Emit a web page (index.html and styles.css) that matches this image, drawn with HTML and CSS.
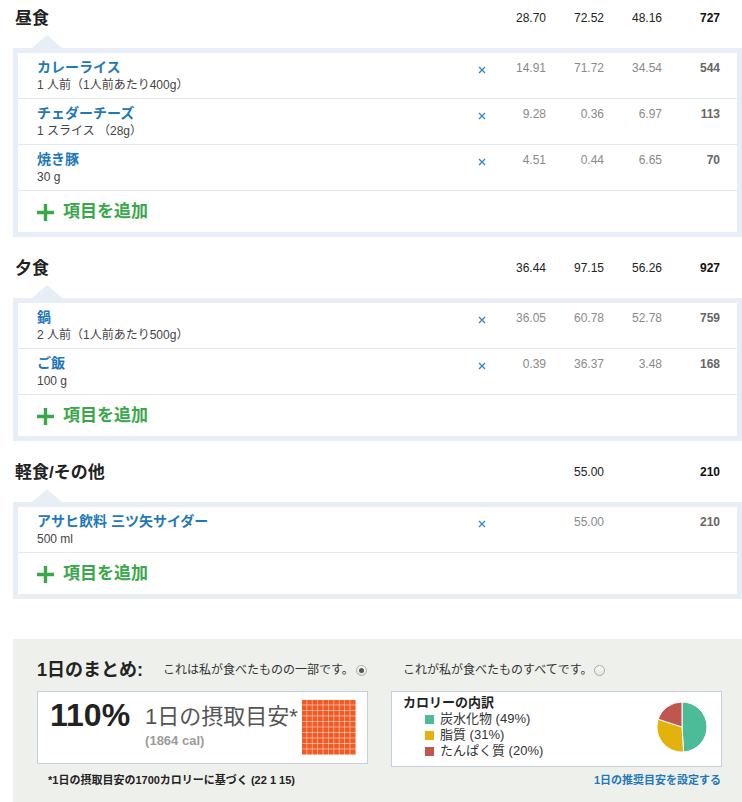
FILE: index.html
```html
<!DOCTYPE html>
<html lang="ja">
<head>
  <meta charset="UTF-8" />
  <meta name="viewport" content="width=device-width, initial-scale=1.0"/>
  <title>食事の記録</title>
  <link rel="stylesheet" href="styles.css">
</head>
<body>
  <div class="diary">

    <div class="meal">
      <div class="meal-head">
        <h2>昼食</h2><span></span>
        <span class="n">28.70</span><span class="n">72.52</span><span class="n">48.16</span><span class="n cal">727</span>
      </div>
      <div class="meal-card">
        <div class="food-row">
          <div class="food"><a href="#">カレーライス</a><div class="qty">1 人前（1人前あたり400g）</div></div>
          <span class="del"><svg width="8" height="8" viewBox="0 0 8 8"><path d="M1 1L7 7M7 1L1 7" stroke="#2f86c4" stroke-width="1.3"/></svg></span>
          <span class="n">14.91</span><span class="n">71.72</span><span class="n">34.54</span><span class="n cal">544</span>
        </div>
        <div class="food-row">
          <div class="food"><a href="#">チェダーチーズ</a><div class="qty">1 スライス （28g）</div></div>
          <span class="del"><svg width="8" height="8" viewBox="0 0 8 8"><path d="M1 1L7 7M7 1L1 7" stroke="#2f86c4" stroke-width="1.3"/></svg></span>
          <span class="n">9.28</span><span class="n">0.36</span><span class="n">6.97</span><span class="n cal">113</span>
        </div>
        <div class="food-row">
          <div class="food"><a href="#">焼き豚</a><div class="qty">30 g</div></div>
          <span class="del"><svg width="8" height="8" viewBox="0 0 8 8"><path d="M1 1L7 7M7 1L1 7" stroke="#2f86c4" stroke-width="1.3"/></svg></span>
          <span class="n">4.51</span><span class="n">0.44</span><span class="n">6.65</span><span class="n cal">70</span>
        </div>
        <div class="add-row">
          <a href="#" class="add"><svg width="17" height="17" viewBox="0 0 17 17"><path d="M8.5 0V17M0 8.5H17" stroke="#3aa84a" stroke-width="3.4"/></svg>項目を追加</a>
        </div>
      </div>
    </div>

    <div class="meal">
      <div class="meal-head">
        <h2>夕食</h2><span></span>
        <span class="n">36.44</span><span class="n">97.15</span><span class="n">56.26</span><span class="n cal">927</span>
      </div>
      <div class="meal-card">
        <div class="food-row">
          <div class="food"><a href="#">鍋</a><div class="qty">2 人前（1人前あたり500g）</div></div>
          <span class="del"><svg width="8" height="8" viewBox="0 0 8 8"><path d="M1 1L7 7M7 1L1 7" stroke="#2f86c4" stroke-width="1.3"/></svg></span>
          <span class="n">36.05</span><span class="n">60.78</span><span class="n">52.78</span><span class="n cal">759</span>
        </div>
        <div class="food-row">
          <div class="food"><a href="#">ご飯</a><div class="qty">100 g</div></div>
          <span class="del"><svg width="8" height="8" viewBox="0 0 8 8"><path d="M1 1L7 7M7 1L1 7" stroke="#2f86c4" stroke-width="1.3"/></svg></span>
          <span class="n">0.39</span><span class="n">36.37</span><span class="n">3.48</span><span class="n cal">168</span>
        </div>
        <div class="add-row">
          <a href="#" class="add"><svg width="17" height="17" viewBox="0 0 17 17"><path d="M8.5 0V17M0 8.5H17" stroke="#3aa84a" stroke-width="3.4"/></svg>項目を追加</a>
        </div>
      </div>
    </div>

    <div class="meal">
      <div class="meal-head">
        <h2>軽食/その他</h2><span></span>
        <span class="n"></span><span class="n">55.00</span><span class="n"></span><span class="n cal">210</span>
      </div>
      <div class="meal-card">
        <div class="food-row">
          <div class="food"><a href="#">アサヒ飲料 三ツ矢サイダー</a><div class="qty">500 ml</div></div>
          <span class="del"><svg width="8" height="8" viewBox="0 0 8 8"><path d="M1 1L7 7M7 1L1 7" stroke="#2f86c4" stroke-width="1.3"/></svg></span>
          <span class="n"></span><span class="n">55.00</span><span class="n"></span><span class="n cal">210</span>
        </div>
        <div class="add-row">
          <a href="#" class="add"><svg width="17" height="17" viewBox="0 0 17 17"><path d="M8.5 0V17M0 8.5H17" stroke="#3aa84a" stroke-width="3.4"/></svg>項目を追加</a>
        </div>
      </div>
    </div>

    <div class="summary">
      <div class="summary-top">
        <div class="summary-left">
          <h3>1日のまとめ:</h3>
          <label class="opt">これは私が食べたものの一部です。<span class="radio checked"></span></label>
        </div>
        <div class="summary-right">
          <label class="opt">これが私が食べたものすべてです。<span class="radio"></span></label>
        </div>
      </div>

      <div class="summary-boxes">
        <div class="box goal">
          <div class="pct">110%</div>
          <div class="goal-text">
            <div class="goal-title">1日の摂取目安*</div>
            <div class="goal-cal">(1864 cal)</div>
          </div>
          <div class="goal-grid"></div>
        </div>
        <div class="box breakdown">
          <div class="legend">
            <div class="legend-title">カロリーの内訳</div>
            <div class="legend-item"><span class="sw carb"></span>炭水化物 (49%)</div>
            <div class="legend-item"><span class="sw fat"></span>脂質 (31%)</div>
            <div class="legend-item"><span class="sw prot"></span>たんぱく質 (20%)</div>
          </div>
          <svg class="pie" width="52" height="52" viewBox="-26 -26 52 52">
            <path d="M0 0L0 -25A25 25 0 0 1 1.57 24.95Z" fill="#4cbb98" stroke="#fff" stroke-width="1"/>
            <path d="M0 0L1.57 24.95A25 25 0 0 1 -23.78 -7.73Z" fill="#e4b20c" stroke="#fff" stroke-width="1"/>
            <path d="M0 0L-23.78 -7.73A25 25 0 0 1 0 -25Z" fill="#c0574f" stroke="#fff" stroke-width="1"/>
          </svg>
        </div>
      </div>

      <div class="summary-foot">
        <span class="note">*1日の摂取目安の1700カロリーに基づく (22 1 15)</span>
        <a href="#" class="set-goal">1日の推奨目安を設定する</a>
      </div>
    </div>

  </div>
</body>
</html>
```

FILE: styles.css
```css
body {
  margin: 0;
  background-color: #fff;
  font-family: "Liberation Sans", "Noto Sans CJK JP", sans-serif;
  color: #222;
}
a {
  text-decoration: none;
}
.diary {
  width: 742px;
}
.meal {
  margin-bottom: 13px;
}
.meal-head,
.food-row {
  display: grid;
  grid-template-columns: 1fr 20px 54px 58px 58px 58px;
}
.meal-head {
  height: 36px;
  align-items: center;
  padding: 0 22px 0 15px;
}
.meal-head h2 {
  margin: 0;
  padding-top: 2px;
  font-size: 17px;
  line-height: 22px;
  font-weight: bold;
  color: #222;
}
.n {
  text-align: right;
  font-size: 12px;
  line-height: 18px;
}
.meal-head .n {
  color: #222;
}
.meal-head .cal {
  font-weight: bold;
  color: #111;
}
.meal-card {
  position: relative;
  margin: 12px 0 0 13px;
  border: 5px solid #e8eef5;
  background-color: #fff;
}
.meal-card::before {
  content: "";
  position: absolute;
  top: -18px;
  left: 14px;
  width: 0;
  height: 0;
  border-left: 15px solid transparent;
  border-right: 15px solid transparent;
  border-bottom: 13px solid #e8eef5;
}
.food-row {
  padding: 5px 17px 4px 19px;
  border-bottom: 1px solid #e5e9ee;
  align-items: start;
}
.food a {
  display: block;
  font-size: 14px;
  line-height: 19px;
  font-weight: bold;
  color: #1f78b8;
}
.qty {
  font-size: 12px;
  line-height: 17px;
  color: #444;
}
.food-row .n {
  padding-top: 1px;
  color: #8a8a8a;
}
.food-row .cal {
  font-weight: bold;
  color: #666;
}
.del {
  display: flex;
  justify-content: center;
  padding-top: 8px;
}
.add-row {
  height: 41px;
  display: flex;
  align-items: center;
  padding-left: 19px;
}
.add {
  display: flex;
  align-items: center;
  gap: 9px;
  font-size: 17px;
  font-weight: bold;
  color: #3aa84a;
  line-height: 22px;
  padding-top: 1px;
}
.summary {
  margin: 40px 0 0 13px;
  background-color: #eef0ec;
  padding: 19px 20px 20px 24px;
}
.summary-top,
.summary-boxes {
  display: grid;
  grid-template-columns: minmax(0, 1fr) minmax(0, 1fr);
  gap: 23px;
}
.summary-left {
  display: flex;
  align-items: center;
  gap: 20px;
}
.summary-left h3 {
  margin: 0;
  font-size: 18px;
  line-height: 24px;
  font-weight: bold;
  color: #222;
}
.summary-right {
  display: flex;
  align-items: center;
  padding-left: 12px;
}
.opt {
  display: flex;
  align-items: center;
  gap: 2px;
  font-size: 12px;
  line-height: 24px;
  color: #333;
}
.radio {
  display: inline-block;
  width: 9px;
  height: 9px;
  border: 1px solid #aaa;
  border-radius: 50%;
  background: linear-gradient(#fff, #e2e2e2);
  position: relative;
}
.radio.checked::after {
  content: "";
  position: absolute;
  left: 2px;
  top: 2px;
  width: 5px;
  height: 5px;
  border-radius: 50%;
  background-color: #555;
}
.summary-boxes {
  margin-top: 9px;
}
.box {
  height: 71px;
  background-color: #fff;
  border: 1px solid #c4d0dc;
  display: flex;
}
.goal {
  align-items: flex-start;
  padding: 0 11px 0 12px;
}
.pct {
  font-size: 32px;
  font-weight: bold;
  line-height: 36px;
  margin-top: 5px;
  color: #222;
  white-space: nowrap;
}
.goal-text {
  margin-left: 15px;
  white-space: nowrap;
}
.goal-title {
  font-size: 22px;
  line-height: 28px;
  margin-top: 11px;
  color: #555;
}
.goal-cal {
  font-size: 13px;
  line-height: 16px;
  margin-top: 2px;
  font-weight: bold;
  color: #9b9b9b;
}
.goal-grid {
  flex: none;
  width: 54px;
  height: 55px;
  margin: 8px 0 0 auto;
  background-color: #f15a24;
  background-image:
    linear-gradient(90deg, rgba(255, 255, 255, 0.5) 1px, transparent 1px),
    linear-gradient(rgba(255, 255, 255, 0.5) 1px, transparent 1px);
  background-size: 5.4px 5.5px;
  background-position: -1px -1px;
}
.breakdown {
  justify-content: space-between;
  padding: 3px 13px 0 11px;
}
.legend-title {
  font-size: 13px;
  font-weight: bold;
  line-height: 16px;
  color: #222;
}
.legend-item {
  display: flex;
  align-items: center;
  gap: 6px;
  padding-left: 22px;
  font-size: 13px;
  line-height: 16px;
  color: #333;
}
.sw {
  width: 9px;
  height: 9px;
}
.sw.carb {
  background-color: #4cbb98;
}
.sw.fat {
  background-color: #e4b20c;
}
.sw.prot {
  background-color: #c0574f;
}
.pie {
  margin-top: 6px;
}
.summary-foot {
  display: flex;
  justify-content: space-between;
  margin-top: 6px;
  padding: 0 1px 0 11px;
  font-size: 11px;
  line-height: 14px;
  font-weight: bold;
}
.note {
  color: #222;
}
.set-goal {
  color: #1f78b8;
}
```
